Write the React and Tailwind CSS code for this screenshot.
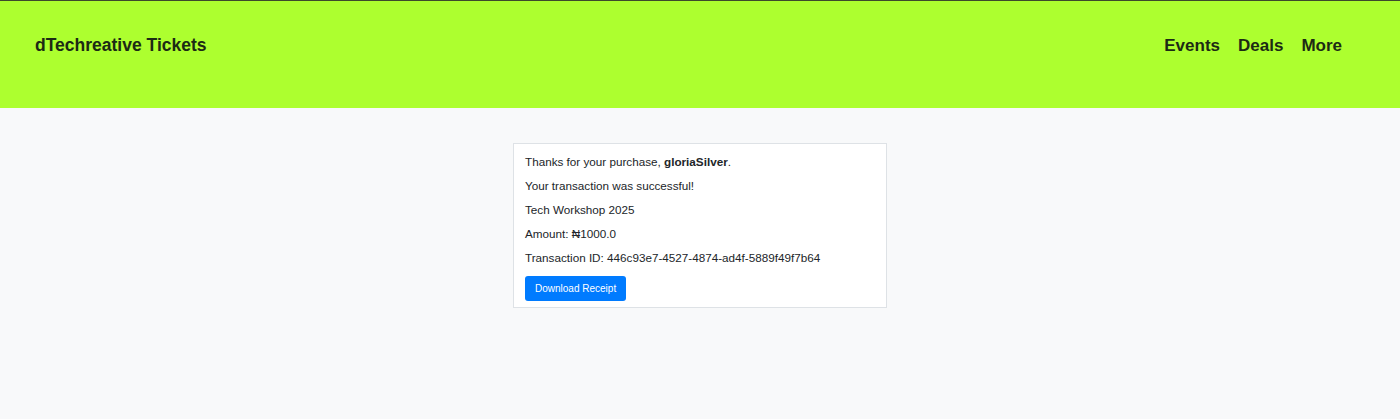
export default function App() {
  const font = { fontFamily: '"Liberation Sans", Arial, sans-serif' };
  return (
    <div className="min-h-[419px] bg-[#f8f9fa]" style={font}>
      <header className="flex h-[108px] items-center justify-between border-t border-[#3d4a2c] bg-[#adff2f] pl-[35px] pr-[58px] pb-[18px]">
        <div className="text-[17.5px] font-bold text-[#1c2a14]">dTechreative Tickets</div>
        <nav className="flex gap-[18px] text-[17px] font-bold text-[#1c2a14]">
          <a>Events</a>
          <a>Deals</a>
          <a>More</a>
        </nav>
      </header>
      <main className="flex justify-center pt-[35px]">
        <div className="w-[374px] border border-[#dee2e6] bg-white px-[11px] pt-[11px] pb-[6px] text-[11.7px] leading-[14px] text-[#212529]">
          <p className="mb-[10px]">Thanks for your purchase, <b>gloriaSilver</b>.</p>
          <p className="mb-[10px]">Your transaction was successful!</p>
          <p className="mb-[10px]">Tech Workshop 2025</p>
          <p className="mb-[10px]">Amount: ₦1000.0</p>
          <p className="mb-[11px]">Transaction ID: 446c93e7-4527-4874-ad4f-5889f49f7b64</p>
          <button className="h-[25px] rounded-[3px] bg-[#007bff] px-[10px] text-[10px] text-white">Download Receipt</button>
        </div>
      </main>
    </div>
  );
}
